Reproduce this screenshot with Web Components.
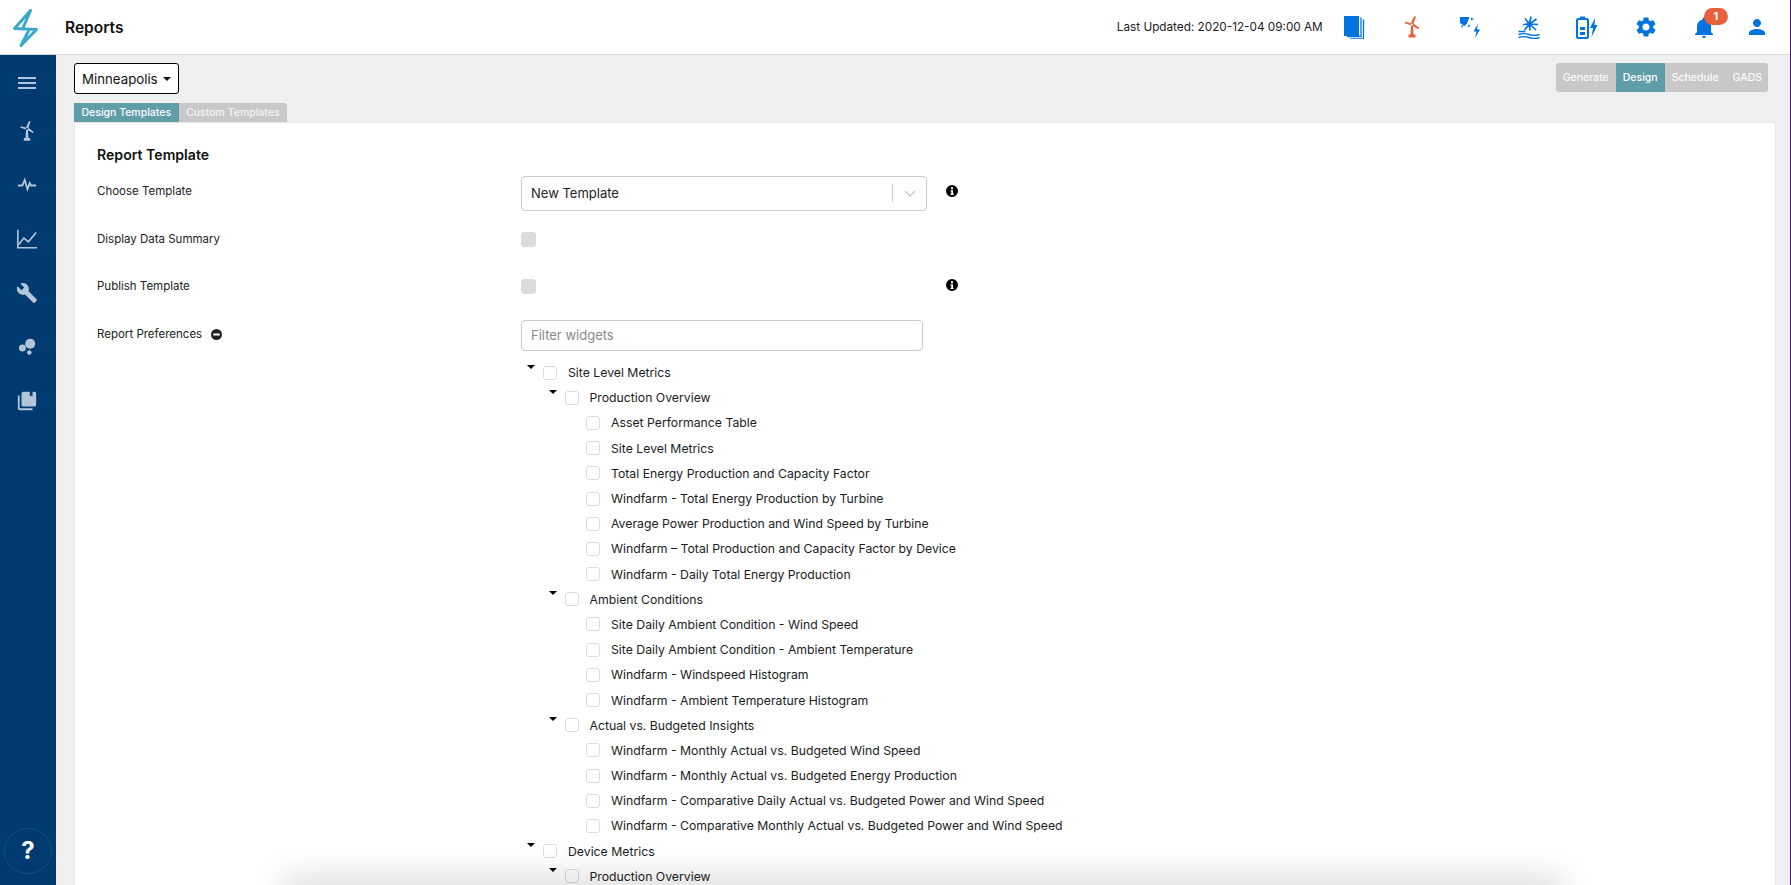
<!DOCTYPE html>
<html>
<head>
<meta charset="utf-8">
<title>Reports</title>
<style>
    html, body { margin: 0; height: 100%; overflow: hidden; }
    body { font-family: Inter, "Liberation Sans", sans-serif; font-size: 12.25px; color: #1c1c1c; background: #efefef; }
</style>
</head>
<body>
<report-app>
    <top-bar slot="top" title="Reports" updated="Last Updated: 2020-12-04 09:00 AM"></top-bar>
    <side-nav slot="side"></side-nav>

    <div class="toolbar" slot="toolbar-left"><site-button label="Minneapolis"></site-button></div>
    <seg-group slot="toolbar-right" items="Generate,Design,Schedule,GADS" active="Design"></seg-group>
    <tab-strip slot="tabs" items="Design Templates,Custom Templates" active="Design Templates"></tab-strip>

    <template-card slot="card" heading="Report Template">
        <form-row label="Choose Template" gap="13" info="top">
            <select-box value="New Template"></select-box>
        </form-row>
        <form-row label="Display Data Summary" height="47" inset="8">
            <check-box disabled></check-box>
        </form-row>
        <form-row label="Publish Template" height="49" inset="8" info="flag">
            <check-box disabled></check-box>
        </form-row>
        <form-row label="Report Preferences" collapse>
            <filter-input placeholder="Filter widgets"></filter-input>
            <tree-node label="Site Level Metrics">
                <tree-node label="Production Overview">
                    <tree-node label="Asset Performance Table"></tree-node>
                    <tree-node label="Site Level Metrics"></tree-node>
                    <tree-node label="Total Energy Production and Capacity Factor"></tree-node>
                    <tree-node label="Windfarm - Total Energy Production by Turbine"></tree-node>
                    <tree-node label="Average Power Production and Wind Speed by Turbine"></tree-node>
                    <tree-node label="Windfarm – Total Production and Capacity Factor by Device"></tree-node>
                    <tree-node label="Windfarm - Daily Total Energy Production"></tree-node>
                </tree-node>
                <tree-node label="Ambient Conditions">
                    <tree-node label="Site Daily Ambient Condition - Wind Speed"></tree-node>
                    <tree-node label="Site Daily Ambient Condition - Ambient Temperature"></tree-node>
                    <tree-node label="Windfarm - Windspeed Histogram"></tree-node>
                    <tree-node label="Windfarm - Ambient Temperature Histogram"></tree-node>
                </tree-node>
                <tree-node label="Actual vs. Budgeted Insights">
                    <tree-node label="Windfarm - Monthly Actual vs. Budgeted Wind Speed"></tree-node>
                    <tree-node label="Windfarm - Monthly Actual vs. Budgeted Energy Production"></tree-node>
                    <tree-node label="Windfarm - Comparative Daily Actual vs. Budgeted Power and Wind Speed"></tree-node>
                    <tree-node label="Windfarm - Comparative Monthly Actual vs. Budgeted Power and Wind Speed"></tree-node>
                </tree-node>
            </tree-node>
            <tree-node label="Device Metrics">
                <tree-node label="Production Overview" open></tree-node>
            </tree-node>
        </form-row>
    </template-card>
</report-app>

<script>
// all icons are in a 24x24 box, colour comes from currentColor
const ICONS = {
    pages: `<path d="M3 1h15v20H3z"/><path d="M20 4v19H6M22.500 6v19.500H9" fill="none" stroke="currentColor" stroke-width="1.300" transform="translate(0 -1.500)"/>`,
    turbine: `<path d="M11 10h2l.6 10h-3.200zM8.500 19.500h7V22.500h-7z"/><path d="M10.800 8.200 14.200 1l1.700.7-2.300 7 5.800 4.300-1 1.300-6.400-3.800-7.200-2 .5-1.800z"/><circle cx="12" cy="9.500" r="1.100" fill="var(--hub, #fff)"/>`,
    solar: `<path d="M2 2h9.500L9 8.500 6.500 11 2 8z"/><path d="M13 2.500l3 1.500-3 1.200zM3 10.500h2.500L4 13zM10 9.500l2.500 1-2 2z"/><path d="M20 9l-4.500 7.500h3L17 23l5-8.500h-3z"/>`,
    water: `<circle cx="12.500" cy="9" r="2.500"/><path d="M12.500 9 14 1.500M12.500 9 8 3.500M12.500 9 19.500 4M12.500 9 21 9.500M12.500 9 19 15M12.500 9 6 9.500M12.500 9 7.500 15M12.500 9 13 15.500" fill="none" stroke="currentColor" stroke-width="1.700"/><path d="M1.500 16.500h7M1.500 19.500q5-1.800 10.500 0t10.500 0M1.500 22.500q5-1.800 10.500 0t10.500 0" fill="none" stroke="currentColor" stroke-width="1.400"/>`,
    battery: `<path d="M5 1.500h5V4H5z"/><rect x="2" y="4" width="11" height="19" rx="1.500" fill="none" stroke="currentColor" stroke-width="2"/><path d="M5 12h5v3H5zM5 17h5v3H5z"/><path d="M20 3l-5 10h3l-1.500 9 6-12h-3z"/>`,
    gear: `<path d="M19.140 12.940c.04-.3.06-.61.06-.94 0-.32-.02-.64-.07-.94l2.030-1.580c.18-.14.23-.41.12-.61l-1.920-3.320c-.12-.22-.37-.29-.59-.22l-2.390.96c-.5-.38-1.030-.7-1.620-.94l-.36-2.540c-.04-.24-.24-.41-.48-.41h-3.840c-.24 0-.43.17-.47.41l-.36 2.540c-.59.24-1.130.57-1.620.94l-2.390-.96c-.22-.08-.47 0-.59.22L2.740 8.870c-.12.21-.08.47.12.61l2.030 1.580c-.05.3-.09.63-.09.94s.02.64.07.94l-2.030 1.580c-.18.14-.23.41-.12.61l1.920 3.320c.12.22.37.29.59.22l2.390-.96c.5.38 1.030.7 1.620.94l.36 2.540c.05.24.24.41.48.41h3.840c.24 0 .44-.17.47-.41l.36-2.540c.59-.24 1.130-.56 1.620-.94l2.390.96c.22.08.47 0 .59-.22l1.920-3.320c.12-.22.07-.47-.12-.61l-2.010-1.580zM12 15.600c-1.980 0-3.600-1.620-3.600-3.600s1.620-3.600 3.600-3.600 3.600 1.620 3.600 3.600-1.620 3.600-3.600 3.600z"/>`,
    bell: `<path d="M12 23c1.100 0 2-.9 2-2h-4c0 1.100.89 2 2 2zm7-6v-6c0-3.070-2-5.640-5.500-6.320V4c0-.83-.67-1.500-1.500-1.500s-1.500.67-1.500 1.500v.68C7 5.360 5 7.920 5 11v6l-2 2v1h18v-1l-2-2z"/>`,
    person: `<path d="M12 12c2.210 0 4-1.790 4-4s-1.790-4-4-4-4 1.790-4 4 1.790 4 4 4zm0 2c-2.670 0-8 1.340-8 4v2h16v-2c0-2.660-5.330-4-8-4z"/>`,
    pulse: `<path d="M2 12.500h5l2.500-6 3 10 2.500-6.500 1.500 2.500H22" fill="none" stroke="currentColor" stroke-width="2"/>`,
    chart: `<path d="M2 2v19.500h21" fill="none" stroke="currentColor" stroke-width="1.800"/><path d="M3 18l5.500-7 5 4L22 5" fill="none" stroke="currentColor" stroke-width="1.800"/>`,
    wrench: `<path d="M22.700 19l-9.100-9.100c.9-2.300.4-5-1.500-6.900-2-2-5-2.400-7.400-1.300L9 6 6 9 1.600 4.700C.4 7.100.9 10.100 2.900 12.100c1.900 1.900 4.600 2.400 6.900 1.500l9.100 9.100c.4.4 1 .4 1.400 0l2.300-2.300c.5-.4.5-1.100.1-1.400z"/>`,
    bubbles: `<circle cx="7" cy="13" r="3.800"/><circle cx="15.500" cy="8.500" r="5.500"/><circle cx="14.500" cy="18" r="2.500"/>`,
    library: `<path d="M4 6H2v14c0 1.100.9 2 2 2h14v-2H4V6zm16-4H8c-1.100 0-2 .9-2 2v12c0 1.100.9 2 2 2h12c1.100 0 2-.9 2-2V4c0-1.100-.9-2-2-2zM18 7l-1.500-1-1.500 1V2h3z" fill-rule="evenodd"/>`,
    info: `<path fill-rule="evenodd" d="M12 0a12 12 0 1 0 0 24 12 12 0 0 0 0-24zM10 4.500h4v3.800h-4zM9 10.500h5v7h1.500v2.500h-6.500v-2.500h1.500v-4.500H9z"/>`,
    minus: `<path fill-rule="evenodd" d="M12 0a12 12 0 1 0 0 24 12 12 0 0 0 0-24zM5 10h14v4H5z"/>`
};

class AppIcon extends HTMLElement {
    connectedCallback () {
        const size = this.getAttribute ("size") || 24;
        this.attachShadow ({mode: 'open'}).innerHTML = `
        <style>:host { display: inline-flex; } svg { display: block; fill: currentColor; }</style>
        <svg width="${size}" height="${size}" viewBox="0 0 24 24">${ICONS[this.getAttribute ("name")]}</svg>`;
    }
}
customElements.define ("app-icon", AppIcon);

const appTemplate = document.createElement ("template");
appTemplate.innerHTML = `
<style>
    :host {
        display: grid;
        grid-template-columns: 56px 1fr;
        grid-template-rows: 55px 1fr;
        height: 100vh;
        overflow: hidden;
        border-right: 1px solid #4a1d6e;
        box-sizing: border-box;
    }
    .top { grid-column: 1 / 3; }
    main {
        position: relative;
        overflow: hidden;
        padding: 8px 14px 0 18px;
        min-width: 0;
    }
    .head { display: flex; justify-content: space-between; align-items: flex-start; height: 40px; padding-right: 8px; }
    .shade {
        position: absolute;
        left: 235px;
        right: 235px;
        bottom: -14px;
        height: 14px;
        box-shadow: 0 0 32px 8px rgba(0, 0, 0, .15);
        pointer-events: none;
    }
</style>
<div class="top"><slot name="top"></slot></div>
<slot name="side"></slot>
<main>
    <div class="head">
        <slot name="toolbar-left"></slot>
        <slot name="toolbar-right"></slot>
    </div>
    <slot name="tabs"></slot>
    <slot name="card"></slot>
    <div class="shade"></div>
</main>`;

class ReportApp extends HTMLElement {
    constructor () {
        super ();
        this.attachShadow ({mode: 'open'}).appendChild (appTemplate.content.cloneNode (true));
    }
}
customElements.define ("report-app", ReportApp);

class TopBar extends HTMLElement {
    connectedCallback () {
        const tools = [
            ["pages", "#0073de"], ["turbine", "#e8603c"], ["solar", "#0073de"], ["water", "#0073de"],
            ["battery", "#0073de"], ["gear", "#0073de"], ["bell", "#0073de"], ["person", "#0073de"]
        ];
        this.attachShadow ({mode: 'open'}).innerHTML = `
        <style>
            :host {
                display: flex;
                align-items: center;
                height: 55px;
                box-sizing: border-box;
                background: #fff;
                border-bottom: 1px solid #d8d8d8;
                padding-right: 9px;
            }
            .logo { width: 65px; flex: none; display: flex; }
            h1 { margin: 0; font-size: 15.500px; font-weight: 600; color: #111; flex: 1; }
            .updated { font-size: 11.750px; margin-right: 1px; color: #1c1c1c; }
            .tool { width: 58.500px; flex: none; display: flex; justify-content: center; position: relative; margin-bottom: 1px; }
            .tool:last-child { width: 47.750px; }
            .badge {
                position: absolute;
                left: 29px;
                top: -7px;
                width: 24px;
                height: 17px;
                border-radius: 9px;
                background: #e8603c;
                color: #fff;
                font: 700 11px/17px Inter, sans-serif;
                text-align: center;
            }
        </style>
        <div class="logo">
            <svg width="56" height="54" viewBox="0 0 56 54" fill="none" stroke="#3ba8cb" stroke-width="3" stroke-linecap="round" stroke-linejoin="round">
                <path d="M30.500 10.500 14.500 28.500 36.500 29.500 21 45.500M30.500 10.500 23 28M29 30 21 45.500"/>
            </svg>
        </div>
        <h1>${this.getAttribute ("title")}</h1>
        <span class="updated">${this.getAttribute ("updated")}</span>
        ${tools.map (([name, color]) => `<div class="tool" style="color:${color}"><app-icon name="${name}"></app-icon>${name === "bell" ? '<span class="badge">1</span>' : ''}</div>`).join ("")}`;
    }
}
customElements.define ("top-bar", TopBar);

class SideNav extends HTMLElement {
    connectedCallback () {
        const items = ["turbine", "pulse", "chart", "wrench", "bubbles", "library"];
        this.attachShadow ({mode: 'open'}).innerHTML = `
        <style>
            :host {
                display: flex;
                flex-direction: column;
                align-items: center;
                background: #003a70;
                color: #b4c5d9;
                padding: 6px 2px 0 0;
                position: relative;
                --hub: #003a70;
            }
            .burger { height: 43px; display: flex; flex-direction: column; justify-content: center; gap: 3px; }
            .burger i { display: block; width: 18px; height: 2px; background: #b4c5d9; }
            .item { height: 54px; display: flex; align-items: center; justify-content: center; }
            .help {
                position: absolute;
                left: 4px;
                bottom: 11px;
                width: 46px;
                height: 44px;
                border-radius: 50%;
                border: 1px solid #174a7e;
                color: #fff;
                font: 700 24px/44px Inter, sans-serif;
                text-align: center;
            }
        </style>
        <div class="burger"><i></i><i></i><i></i></div>
        ${items.map (n => `<div class="item"><app-icon name="${n}" size="22"></app-icon></div>`).join ("")}
        <div class="help">?</div>`;
    }
}
customElements.define ("side-nav", SideNav);

class SiteButton extends HTMLElement {
    connectedCallback () {
        this.attachShadow ({mode: 'open'}).innerHTML = `
        <style>
            :host {
                display: inline-flex;
                align-items: center;
                height: 31px;
                box-sizing: border-box;
                padding: 0 7px 0 7px;
                border: 1px solid #000;
                border-radius: 3px;
                background: #fff;
                font-size: 13.250px;
                color: #111;
            }
            i { margin-left: 5px; border: 4px solid transparent; border-top-color: #111; border-bottom: 0; }
        </style>
        ${this.getAttribute ("label")}<i></i>`;
    }
}
customElements.define ("site-button", SiteButton);

class SegGroup extends HTMLElement {
    connectedCallback () {
        const active = this.getAttribute ("active");
        this.attachShadow ({mode: 'open'}).innerHTML = `
        <style>
            :host {
                display: inline-flex;
                height: 29px;
                background: #c8c8c8;
                border-radius: 3px;
                overflow: hidden;
                font-size: 10.500px;
                font-weight: 500;
                color: #fafafa;
            }
            span { display: flex; align-items: center; padding: 0 7px; }
            span:first-child { padding-right: 8.200px; }
            span:last-child { padding-right: 6px; }
            .on { background: #5f9ea8; color: #fff; }
        </style>
        ${this.getAttribute ("items").split (",").map (t => `<span class="${t === active ? "on" : ""}">${t}</span>`).join ("")}`;
    }
}
customElements.define ("seg-group", SegGroup);

class TabStrip extends HTMLElement {
    connectedCallback () {
        const active = this.getAttribute ("active");
        this.attachShadow ({mode: 'open'}).innerHTML = `
        <style>
            :host {
                display: flex;
                height: 19px;
                font-size: 10.500px;
                font-weight: 500;
                color: #f4f4f4;
            }
            span { display: flex; align-items: center; padding: 0 7.500px; background: #c8c8c8; }
            span:first-child { border-top-left-radius: 3px; }
            span:last-child { border-top-right-radius: 3px; }
            .on { background: #5f9ea8; color: #fff; }
        </style>
        ${this.getAttribute ("items").split (",").map (t => `<span class="${t === active ? "on" : ""}">${t}</span>`).join ("")}`;
    }
}
customElements.define ("tab-strip", TabStrip);

class TemplateCard extends HTMLElement {
    connectedCallback () {
        this.attachShadow ({mode: 'open'}).innerHTML = `
        <style>
            :host {
                display: block;
                background: #fff;
                border: 1px solid #e6e6e6;
                border-radius: 3px;
                padding: 22px 22px 0 22px;
                height: 900px;
            }
            h2 { margin: 0 0 12px; font-size: 14.100px; line-height: 19px; font-weight: 600; color: #111; }
        </style>
        <h2>${this.getAttribute ("heading")}</h2>
        <slot></slot>`;
    }
}
customElements.define ("template-card", TemplateCard);

class FormRow extends HTMLElement {
    connectedCallback () {
        const height = this.getAttribute ("height");
        const inset = this.getAttribute ("inset") || 0;
        const info = this.hasAttribute ("info");
        const collapse = this.hasAttribute ("collapse");
        this.attachShadow ({mode: 'open'}).innerHTML = `
        <style>
            :host {
                display: grid;
                grid-template-columns: 424px 406px auto;
                ${height ? `height:${height}px;` : ""}
                margin-bottom: ${this.getAttribute ("gap") || 0}px;
            }
            .label { display: flex; align-items: center; gap: 9px; height: ${collapse ? 28 : 30}px; font-size: 11.500px; color: #222; }
            .control { padding-top: ${inset}px; min-width: 0; }
            .extra { padding: ${this.getAttribute ("info") === "top" ? 9 : 8}px 0 0 19px; color: #000; }
        </style>
        <div class="label">${this.getAttribute ("label")}${collapse ? '<app-icon name="minus" size="11"></app-icon>' : ''}</div>
        <div class="control"><slot></slot></div>
        <div class="extra">${info ? '<app-icon name="info" size="12"></app-icon>' : ''}</div>`;
    }
}
customElements.define ("form-row", FormRow);

class SelectBox extends HTMLElement {
    connectedCallback () {
        this.attachShadow ({mode: 'open'}).innerHTML = `
        <style>
            :host {
                display: flex;
                align-items: center;
                height: 35px;
                box-sizing: border-box;
                border: 1px solid #cbcbcb;
                border-radius: 4px;
                padding: 0 0 1px 9px;
                font-size: 13px;
                color: #222;
            }
            span { flex: 1; }
            i { width: 1px; height: 18px; background: #ccc; }
            svg { margin: 0 8px 0 9px; }
        </style>
        <span>${this.getAttribute ("value")}</span><i></i>
        <svg width="16" height="16" viewBox="0 0 16 16" fill="none" stroke="#ccc" stroke-width="1.500"><path d="M3 6l5 5 5-5"/></svg>`;
    }
}
customElements.define ("select-box", SelectBox);

class FilterInput extends HTMLElement {
    connectedCallback () {
        this.attachShadow ({mode: 'open'}).innerHTML = `
        <style>
            :host {
                display: flex;
                align-items: center;
                width: 402px;
                height: 31px;
                box-sizing: border-box;
                border: 1px solid #cbcbcb;
                border-radius: 4px;
                padding: 0 0 1px 9px;
                margin-bottom: 9px;
                font-size: 13px;
                color: #888;
            }
        </style>
        ${this.getAttribute ("placeholder")}`;
    }
}
customElements.define ("filter-input", FilterInput);

class CheckBox extends HTMLElement {
    connectedCallback () {
        const off = this.hasAttribute ("disabled");
        this.attachShadow ({mode: 'open'}).innerHTML = `
        <style>
            :host {
                display: block;
                width: ${off ? 15 : 14}px;
                height: ${off ? 15 : 14}px;
                box-sizing: border-box;
                border: 1px solid #dcdcdc;
                border-radius: 3px;
                flex: none;
                background: ${off ? "#dcdcdc" : "#fff"};
            }
        </style>`;
    }
}
customElements.define ("check-box", CheckBox);

class TreeNode extends HTMLElement {
    connectedCallback () {
        // "open" keeps the caret when the children are not loaded yet
        const parent = this.children.length > 0 || this.hasAttribute ("open");
        this.attachShadow ({mode: 'open'}).innerHTML = `
        <style>
            :host { display: block; }
            .row { display: flex; align-items: center; height: 25.200px; font-size: 12.250px; color: #1c1c1c; white-space: nowrap; }
            .caret { width: 22px; flex: none; display: flex; padding-left: 6px; box-sizing: border-box; transform: translateY(-6px); }
            .caret i { border: 4px solid transparent; border-top-color: #000; border-bottom: 0; }
            .label { margin-left: 11px; }
            .kids { padding-left: 21.500px; }
        </style>
        <div class="row">
            <div class="caret">${parent ? "<i></i>" : ""}</div>
            <check-box></check-box>
            <span class="label">${this.getAttribute ("label")}</span>
        </div>
        <div class="kids"><slot></slot></div>`;
    }
}
customElements.define ("tree-node", TreeNode);
</script>
</body>
</html>
